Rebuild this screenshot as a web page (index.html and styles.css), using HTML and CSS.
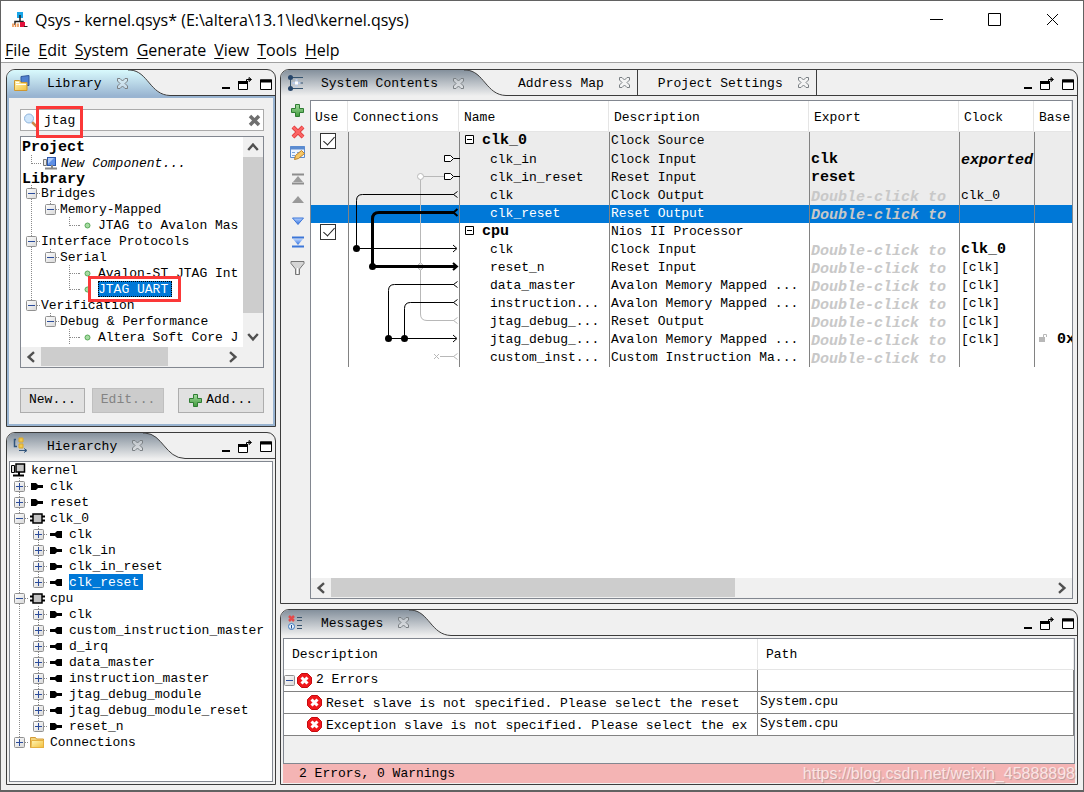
FILE: index.html
```html
<!DOCTYPE html>
<html lang="en">
<head>
<meta charset="utf-8">
<title>Qsys - kernel.qsys*</title>
<link rel="stylesheet" href="styles.css">
</head>
<body>
<svg class="defs" aria-hidden="true">
  <defs>
    <linearGradient id="grad-on" x1="0" y1="0" x2="0" y2="1"><stop offset="0" stop-color="#d9fafd"/><stop offset="1" stop-color="#99b4d1"/></linearGradient>
    <linearGradient id="grad-off" x1="0" y1="0" x2="0" y2="1"><stop offset="0" stop-color="#84909c"/><stop offset="1" stop-color="#f0f0f0"/></linearGradient>
    <linearGradient id="grad-green" x1="0" y1="0" x2="0" y2="1"><stop offset="0" stop-color="#a5dba0"/><stop offset="1" stop-color="#3f9a3a"/></linearGradient>
    <linearGradient id="grad-blue" x1="0" y1="0" x2="0" y2="1"><stop offset="0" stop-color="#b8d3ff"/><stop offset="1" stop-color="#2f6fdd"/></linearGradient>
    <linearGradient id="grad-fold" x1="0" y1="0" x2="1" y2="1"><stop offset="0" stop-color="#fff6b5"/><stop offset="1" stop-color="#f2bf3c"/></linearGradient>
    <linearGradient id="grad-box" x1="0" y1="0" x2="1" y2="1"><stop offset="0" stop-color="#ffffff"/><stop offset="1" stop-color="#d8d8d8"/></linearGradient>
    <symbol id="close" viewBox="0 0 11 11"><path d="M.5.5h2.500L5.500 3 8 .5h2.500v2.500L8 5.500l2.500 2.500v2.500H8L5.500 8 3 10.500H.5V8L3 5.500.5 3z" fill="#ffffff" fill-opacity=".3" stroke="#7b8084"/></symbol>
    <symbol id="min" viewBox="0 0 9 12"><path d="M0 10h8" stroke="#000" stroke-width="2"/></symbol>
    <symbol id="detach" viewBox="0 0 15 14"><path d="M.5 4.500h9v8h-9z" fill="#fff" stroke="#000"/><path d="M0 5.500h10" stroke="#000" stroke-width="3"/><path d="M8.500 5V2.500h4.500M11 .5l2.500 2-2.500 2z" fill="#000" fill-opacity="0" stroke="#000"/></symbol>
    <symbol id="max" viewBox="0 0 12 11"><path d="M.5 1h11v9.500H.5z" fill="#fff" stroke="#000"/><path d="M0 2h12" stroke="#000" stroke-width="3"/></symbol>
    <symbol id="g-v" viewBox="0 0 19 16"><path d="M9.500 0v16" class="dots"/></symbol>
    <symbol id="g-t" viewBox="0 0 19 16"><path d="M9.500 0v16M10 8.500h9" class="dots"/></symbol>
    <symbol id="g-l" viewBox="0 0 19 16"><path d="M9.500 0v9M10 8.500h9" class="dots"/></symbol>
    <symbol id="box" viewBox="0 0 11 11"><rect x=".5" y=".5" width="10" height="10" rx="1" fill="url(#grad-box)" stroke="#919191"/></symbol>
    <symbol id="plus" viewBox="0 0 19 16"><path d="M9.500 0v16M15 8.500h4" class="dots"/><use href="#box" x="4" y="3" width="11" height="11"/><path d="M6 8.500h7M9.500 5v7" stroke="#2b4c9b"/></symbol>
    <symbol id="plus-last" viewBox="0 0 19 16"><path d="M9.500 0v8M15 8.500h4" class="dots"/><use href="#box" x="4" y="3" width="11" height="11"/><path d="M6 8.500h7M9.500 5v7" stroke="#2b4c9b"/></symbol>
    <symbol id="minus" viewBox="0 0 19 16"><path d="M9.500 0v16M15 8.500h4" class="dots"/><use href="#box" x="4" y="3" width="11" height="11"/><path d="M6 8.500h7" stroke="#2b4c9b"/></symbol>
    <symbol id="minus-last" viewBox="0 0 19 16"><path d="M9.500 0v8M15 8.500h4" class="dots"/><use href="#box" x="4" y="3" width="11" height="11"/><path d="M6 8.500h7" stroke="#2b4c9b"/></symbol>
    <symbol id="dot" viewBox="0 0 19 16"><path d="M0 8.500h2" class="dots"/><circle cx="8.500" cy="8.500" r="2.500" fill="#a6dba2" stroke="#57a957"/></symbol>
    <symbol id="port-in" viewBox="0 0 21 16"><path d="M2 5h5l2 2h5v3H9l-2 2H2z"/></symbol>
    <symbol id="port-out" viewBox="0 0 21 16"><path d="M14 5H9L7 7H2v3h5l2 2h5z"/></symbol>
    <symbol id="chip" viewBox="0 0 21 16"><path d="M1 6.500h15M1 10.500h15" stroke="#000" stroke-width="2"/><rect x="4" y="4" width="9" height="9" fill="#c4c4c4" stroke="#000" stroke-width="1.500"/></symbol>
    <symbol id="kernel" viewBox="0 0 21 16"><path d="M1.500 3.500h3v7h-3z" fill="#ddd" stroke="#000"/><path d="M6 2h8.500v8H6z" fill="#c4c4c4" stroke="#000" stroke-width="1.500"/><path d="M9 10v3M3 13.500h11" stroke="#000" stroke-width="2"/></symbol>
    <symbol id="component" viewBox="0 0 20 16"><path d="M2.500 4.500h3v6h-3z" fill="#e8e8e8" stroke="#777"/><rect x="6.500" y="2.500" width="8" height="8" fill="#5f90e6" stroke="#2b57ad"/><path d="M7 3h6l-6 6z" fill="#a9c8fa"/><path d="M11 10v3M4 13.500h12" stroke="#888" stroke-width="2"/></symbol>
    <symbol id="folder" viewBox="0 0 21 16"><path d="M1.500 3.500h5l1 1.500h7v8.500h-13z" fill="#f3d37a" stroke="#d39a35"/><path d="M2.500 6.500h12v7H2z" fill="url(#grad-fold)" stroke="#e5b040"/></symbol>
    <symbol id="add" viewBox="0 0 13 13"><path d="M4.500.5h4v4h4v4h-4v4h-4v-4h-4v-4h4z" fill="url(#grad-green)" stroke="#2f7d33"/></symbol>
    <symbol id="error" viewBox="0 0 15 15"><path d="M4.500.5h6l4 4v6l-4 4h-6l-4-4v-6z" fill="#f0181c" stroke="#c50c10"/><path d="M4.500 4.500l6 6M10.500 4.500l-6 6" stroke="#fff" stroke-width="3"/></symbol>
    <symbol id="tail-on" viewBox="0 0 42 26"><path d="M0 0h2C20 1 22 25 41 25.500L42 26H0z" fill="url(#grad-on)"/><path d="M0 0h2C20 1 22 25 42 25.500" fill="none" stroke="#3c3c3c"/></symbol>
    <symbol id="tail-off" viewBox="0 0 42 26"><path d="M0 0h2C20 1 22 25 41 25.500L42 26H0z" fill="url(#grad-off)"/><path d="M0 0h2C20 1 22 25 42 25.500" fill="none" stroke="#3c3c3c"/></symbol>
    <symbol id="left" viewBox="0 0 10 10"><path d="M7.500 1L3 5l4.500 4" class="chev"/></symbol>
    <symbol id="right" viewBox="0 0 10 10"><path d="M2.500 1L7 5 2.500 9" class="chev"/></symbol>
    <symbol id="up" viewBox="0 0 10 10"><path d="M1 7.500L5 3l4 4.500" class="chev"/></symbol>
    <symbol id="down" viewBox="0 0 10 10"><path d="M1 2.500L5 7l4-4.500" class="chev"/></symbol>
  </defs>
</svg>

<div class="window">
  <div class="titlebar">
    <svg class="logo" width="16" height="18" viewBox="0 0 16 18"><rect x="5" y="1" width="6" height="6" fill="#18a5e8"/><path d="M8 4v7M3 14v-3.500h8v3" fill="none" stroke="#222" stroke-width="1.500"/><path d="M1 16v-3.500M3.500 16v-3.500M6 16v-3.500" stroke="#e88a42" stroke-width="1.500"/><rect x="8" y="11" width="5" height="5" fill="#e2123c"/><path d="M12 15.500h3.500" stroke="#222"/></svg>
    <h1>Qsys - kernel.qsys* (E:\altera\13.1\led\kernel.qsys)</h1>
    <button class="wbtn" aria-label="Minimize"><svg width="13" height="13"><path d="M0 6.500h13"/></svg></button>
    <button class="wbtn" aria-label="Maximize"><svg width="13" height="13"><path d="M.5.5h12v12H.5z"/></svg></button>
    <button class="wbtn" aria-label="Close"><svg width="13" height="13"><path d="M1 1l11 11M12 1L1 12"/></svg></button>
  </div>
  <nav class="menubar">
    <button><u>F</u>ile</button><button><u>E</u>dit</button><button><u>S</u>ystem</button><button><u>G</u>enerate</button><button><u>V</u>iew</button><button><u>T</u>ools</button><button><u>H</u>elp</button>
  </nav>

  <main>
    <div class="column">
      <section class="panel library">
        <header class="tabs">
          <div class="tab on">
            <svg width="18" height="18"><path d="M8 2.500l8-1v10H8z" fill="#4f80cf" stroke="#31589c"/><path d="M1.500 6.500h5l1.500 2h6v8h-12.500z" fill="url(#grad-fold)" stroke="#cf9730"/><path d="M3 10.500h10M3 8.500h3" stroke="#fff"/></svg>
            <span>Library</span>
            <button aria-label="Close Library"><svg width="11" height="11"><use href="#close"/></svg></button>
          </div>
          <svg class="tail" width="42" height="26"><use href="#tail-on"/></svg>
          <div class="fill"><button aria-label="Minimize"><svg width="9" height="12"><use href="#min"/></svg></button><button aria-label="Detach"><svg width="15" height="14"><use href="#detach"/></svg></button><button aria-label="Maximize"><svg width="12" height="11"><use href="#max"/></svg></button></div>
        </header>
        <div class="lib-body">
          <div class="search">
            <svg width="15" height="15"><path d="M9 9l4.500 4.500" stroke="#c98a4a" stroke-width="2.500"/><circle cx="6" cy="5.500" r="4.500" fill="#cfe6fb" stroke="#8fb4dc"/></svg>
            <input type="text" value="jtag" aria-label="Search library">
            <button aria-label="Clear search"><svg width="13" height="13"><path d="M2 2l9 9M11 2l-9 9" stroke="#6f6f6f" stroke-width="3.500"/></svg></button>
            <i class="mark"></i>
          </div>
          <div class="scrollbox">
            <ul class="tree">
              <li class="head">Project</li>
              <li><svg class="g"><use href="#g-l"/></svg><svg width="20" height="16"><use href="#component"/></svg><em>New Component...</em></li>
              <li class="head short">Library</li>
              <li><svg class="g"><use href="#minus"/></svg>Bridges</li>
              <li><svg class="g"><use href="#g-v"/></svg><svg class="g"><use href="#minus-last"/></svg>Memory-Mapped</li>
              <li><svg class="g"><use href="#g-v"/></svg><i class="g"></i><svg class="g"><use href="#g-l"/></svg><svg class="g"><use href="#dot"/></svg>JTAG to Avalon Mas</li>
              <li><svg class="g"><use href="#minus"/></svg>Interface Protocols</li>
              <li><svg class="g"><use href="#g-v"/></svg><svg class="g"><use href="#minus-last"/></svg>Serial</li>
              <li><svg class="g"><use href="#g-v"/></svg><i class="g"></i><svg class="g"><use href="#g-t"/></svg><svg class="g"><use href="#dot"/></svg>Avalon-ST JTAG Int</li>
              <li><svg class="g"><use href="#g-v"/></svg><i class="g"></i><svg class="g"><use href="#g-l"/></svg><svg class="g"><use href="#dot"/></svg><span class="picked focus">JTAG UART<i class="mark"></i></span></li>
              <li><svg class="g"><use href="#minus-last"/></svg>Verification</li>
              <li><i class="g"></i><svg class="g"><use href="#minus-last"/></svg>Debug &amp; Performance</li>
              <li><i class="g"></i><i class="g"></i><svg class="g"><use href="#g-t"/></svg><svg class="g"><use href="#dot"/></svg>Altera Soft Core J</li>
            </ul>
            <div class="vbar"><button aria-label="Up"><svg width="12" height="12"><use href="#up"/></svg></button><div class="track"><div class="thumb"></div></div><button aria-label="Down"><svg width="12" height="12"><use href="#down"/></svg></button></div>
            <div class="hbar"><button aria-label="Left"><svg width="12" height="12"><use href="#left"/></svg></button><div class="track"><div class="thumb"></div></div><button aria-label="Right"><svg width="12" height="12"><use href="#right"/></svg></button></div>
          </div>
          <div class="actions">
            <button>New...</button><button disabled>Edit...</button><button class="last"><svg width="13" height="13"><use href="#add"/></svg>Add...</button>
          </div>
        </div>
      </section>

      <section class="panel hierarchy">
        <header class="tabs">
          <div class="tab off">
            <svg width="18" height="18"><path d="M3 2.500H1.500v7H4" fill="none" stroke="#31557c" stroke-width="1.500"/><path d="M6 1h4v4H6zM6 7h4v4H6z" fill="#f2c94b" stroke="#dba92d"/><path d="M6 13.500h7M11 11.500l3 2-3 2" fill="none" stroke="#31557c"/></svg>
            <span>Hierarchy</span>
            <button aria-label="Close Hierarchy"><svg width="11" height="11"><use href="#close"/></svg></button>
          </div>
          <svg class="tail" width="42" height="26"><use href="#tail-off"/></svg>
          <div class="fill"><button aria-label="Minimize"><svg width="9" height="12"><use href="#min"/></svg></button><button aria-label="Detach"><svg width="15" height="14"><use href="#detach"/></svg></button><button aria-label="Maximize"><svg width="12" height="11"><use href="#max"/></svg></button></div>
        </header>
        <ul class="tree boxed">
          <li><svg class="ic"><use href="#kernel"/></svg>kernel</li>
          <li><svg class="g"><use href="#plus"/></svg><svg class="ic"><use href="#port-in"/></svg>clk</li>
          <li><svg class="g"><use href="#plus"/></svg><svg class="ic"><use href="#port-in"/></svg>reset</li>
          <li><svg class="g"><use href="#minus"/></svg><svg class="ic"><use href="#chip"/></svg>clk_0</li>
          <li><svg class="g"><use href="#g-v"/></svg><svg class="g"><use href="#plus"/></svg><svg class="ic"><use href="#port-out"/></svg>clk</li>
          <li><svg class="g"><use href="#g-v"/></svg><svg class="g"><use href="#plus"/></svg><svg class="ic"><use href="#port-in"/></svg>clk_in</li>
          <li><svg class="g"><use href="#g-v"/></svg><svg class="g"><use href="#plus"/></svg><svg class="ic"><use href="#port-in"/></svg>clk_in_reset</li>
          <li><svg class="g"><use href="#g-v"/></svg><svg class="g"><use href="#plus-last"/></svg><svg class="ic"><use href="#port-out"/></svg><span class="picked">clk_reset</span></li>
          <li><svg class="g"><use href="#minus"/></svg><svg class="ic"><use href="#chip"/></svg>cpu</li>
          <li><svg class="g"><use href="#g-v"/></svg><svg class="g"><use href="#plus"/></svg><svg class="ic"><use href="#port-in"/></svg>clk</li>
          <li><svg class="g"><use href="#g-v"/></svg><svg class="g"><use href="#plus"/></svg><svg class="ic"><use href="#port-out"/></svg>custom_instruction_master</li>
          <li><svg class="g"><use href="#g-v"/></svg><svg class="g"><use href="#plus"/></svg><svg class="ic"><use href="#port-out"/></svg>d_irq</li>
          <li><svg class="g"><use href="#g-v"/></svg><svg class="g"><use href="#plus"/></svg><svg class="ic"><use href="#port-out"/></svg>data_master</li>
          <li><svg class="g"><use href="#g-v"/></svg><svg class="g"><use href="#plus"/></svg><svg class="ic"><use href="#port-out"/></svg>instruction_master</li>
          <li><svg class="g"><use href="#g-v"/></svg><svg class="g"><use href="#plus"/></svg><svg class="ic"><use href="#port-in"/></svg>jtag_debug_module</li>
          <li><svg class="g"><use href="#g-v"/></svg><svg class="g"><use href="#plus"/></svg><svg class="ic"><use href="#port-out"/></svg>jtag_debug_module_reset</li>
          <li><svg class="g"><use href="#g-v"/></svg><svg class="g"><use href="#plus-last"/></svg><svg class="ic"><use href="#port-in"/></svg>reset_n</li>
          <li><svg class="g"><use href="#plus-last"/></svg><svg class="ic"><use href="#folder"/></svg>Connections</li>
        </ul>
      </section>
    </div>

    <div class="column">
      <section class="panel contents">
        <header class="tabs">
          <div class="tab off">
            <svg width="18" height="18"><path d="M3.500 3v11M3.500 3.500H16M3.500 14.500H16M10 9h6" fill="none" stroke="#35536f"/><circle cx="3.500" cy="3.500" r="2.500" fill="#27466b"/><circle cx="3.500" cy="14.500" r="2.500" fill="#27466b"/><path d="M9.500 5v8M5.500 9h8" stroke="#b9cbe8" stroke-width="2"/><rect x="8" y="7.500" width="3" height="3" fill="#fff"/></svg>
            <span>System Contents</span>
            <button aria-label="Close System Contents"><svg width="11" height="11"><use href="#close"/></svg></button>
          </div>
          <svg class="tail" width="42" height="26"><use href="#tail-off"/></svg>
          <div class="tab plain first"><span>Address Map</span><button aria-label="Close Address Map"><svg width="11" height="11"><use href="#close"/></svg></button></div>
          <div class="tab plain"><span>Project Settings</span><button aria-label="Close Project Settings"><svg width="11" height="11"><use href="#close"/></svg></button></div>
          <div class="fill"><button aria-label="Minimize"><svg width="9" height="12"><use href="#min"/></svg></button><button aria-label="Detach"><svg width="15" height="14"><use href="#detach"/></svg></button><button aria-label="Maximize"><svg width="12" height="11"><use href="#max"/></svg></button></div>
        </header>
        <div class="sys-body">
          <div class="toolbar">
            <button aria-label="Add"><svg width="13" height="13"><use href="#add"/></svg></button>
            <button aria-label="Remove"><svg width="14" height="14"><path d="M2 2l10 10M12 2L2 12" stroke="#d93434" stroke-width="4"/><path d="M2 2l10 10M12 2L2 12" stroke="#fb6464" stroke-width="2.500"/></svg></button>
            <button aria-label="Edit"><svg width="17" height="16"><path d="M1.500 1.500h14v11h-14z" fill="#eef5ff" stroke="#5b8bd0"/><path d="M1 3h15" stroke="#5b8bd0" stroke-width="3"/><path d="M3 7.500h3M8 7.500h5M3 10.500h3" stroke="#7da4da"/><path d="M5.500 14.500l1-4 6-5 3 3-6 5z" fill="#f6c766" stroke="#bb802a"/></svg></button>
            <button class="gap" aria-label="Move to top"><svg width="14" height="12"><path d="M1 1.500h12M1 10.500h12" stroke="#8d8d8d" stroke-width="2"/><path d="M7 3l5 6H2z" fill="#9c9c9c"/></svg></button>
            <button aria-label="Move up"><svg width="14" height="12"><path d="M7 2l6 7H1z" fill="#999"/></svg></button>
            <button aria-label="Move down"><svg width="14" height="12"><path d="M1.500 3h11L7 9.500z" fill="url(#grad-blue)" stroke="#3c76d8"/></svg></button>
            <button aria-label="Move to bottom"><svg width="14" height="12"><path d="M1 1.500h12M1 10.500h12" stroke="#3c76d8" stroke-width="2"/><path d="M2 3h10L7 9z" fill="url(#grad-blue)"/></svg></button>
            <button class="gap" aria-label="Filter"><svg width="15" height="16"><path d="M1 1.500h13v2L9.500 9v5.500h-4V9L1 3.500z" fill="#d5d5d5" stroke="#777"/><path d="M7.500 8v6" stroke="#fff"/></svg></button>
          </div>
          <div class="sys-box">
            <div class="grid-wrap">
              <table class="grid">
                <colgroup><col class="c-use"><col class="c-con"><col class="c-name"><col class="c-desc"><col class="c-exp"><col class="c-clk"><col></colgroup>
                <thead><tr><th>Use</th><th>Connections</th><th>Name</th><th>Description</th><th>Export</th><th>Clock</th><th>Base</th></tr></thead>
                <tbody>
                  <tr class="shade"><td><input type="checkbox" checked aria-label="Use clk_0"></td><td class="wires"><svg width="111" height="234" fill="none" stroke="#000">
                    <path d="M71.500 48v134q0 6.500 6.500 6.500h27M75 44.500h21M104.500 188.500l4-3M104.500 188.500l4 3M91 224.500h14M104.500 224.500l4-3M104.500 224.500l4 3M85 222l5 5M90 222l-5 5" stroke="#b8b8b8"/>
                    <circle cx="71.500" cy="44.500" r="3" fill="#fff" stroke="#b8b8b8"/>
                    <path d="M71.500 130.500l4 4-4 4-4-4z" fill="#e0e0e0" stroke="#b8b8b8"/>
                    <path d="M95.500 23.500h6l3 3-3 3h-6zM95.500 41.500h6l3 3-3 3h-6z" fill="#fff"/>
                    <path d="M105 26.500h6M105 44.500h6"/>
                    <path d="M105 62.500H13.500q-6 0-6 6v48H107M108.500 59.500l-4 3 4 3M104 113l4 3.500-4 3.500"/>
                    <path d="M105 80.500H30q-6.500 0-6.500 6.500v47.500H107" stroke-width="3"/>
                    <path d="M108.500 77l-4 3.500 4 3.500M104 131l4 3.500-4 3.500" stroke-width="2"/>
                    <path d="M105 152.500H45.500q-6 0-6 6v48H107M105 170.500H61.500q-6 0-6 6v30M108.500 149.500l-4 3 4 3M108.500 167.500l-4 3 4 3M104 203l4 3.500-4 3.500"/>
                    <g fill="#000" stroke="none"><circle cx="7.500" cy="116.500" r="3.500"/><circle cx="23.500" cy="134.500" r="3.500"/><circle cx="39.500" cy="206.500" r="3.500"/><circle cx="55.500" cy="206.500" r="3.500"/></g>
                  </svg></td><td class="top"><svg width="9" height="9"><path d="M.5.5h8v8h-8zM2 4.500h5"/></svg><b>clk_0</b></td><td>Clock Source</td><td></td><td></td><td></td></tr>
                  <tr class="shade"><td></td><td></td><td class="sub">clk_in</td><td>Clock Input</td><td><b>clk</b></td><td class="low"><b><em>exported</em></b></td><td></td></tr>
                  <tr class="shade"><td></td><td></td><td class="sub">clk_in_reset</td><td>Reset Input</td><td><b>reset</b></td><td></td><td></td></tr>
                  <tr class="shade"><td></td><td></td><td class="sub">clk</td><td>Clock Output</td><td class="hint low">Double-click to</td><td>clk_0</td><td></td></tr>
                  <tr class="sel"><td></td><td></td><td class="sub">clk_reset</td><td>Reset Output</td><td class="hint low">Double-click to</td><td></td><td></td></tr>
                  <tr><td><input type="checkbox" checked aria-label="Use cpu"></td><td></td><td class="top"><svg width="9" height="9"><path d="M.5.5h8v8h-8zM2 4.500h5"/></svg><b>cpu</b></td><td>Nios II Processor</td><td></td><td></td><td></td></tr>
                  <tr><td></td><td></td><td class="sub">clk</td><td>Clock Input</td><td class="hint low">Double-click to</td><td><b>clk_0</b></td><td></td></tr>
                  <tr><td></td><td></td><td class="sub">reset_n</td><td>Reset Input</td><td class="hint low">Double-click to</td><td>[clk]</td><td></td></tr>
                  <tr><td></td><td></td><td class="sub">data_master</td><td>Avalon Memory Mapped ...</td><td class="hint low">Double-click to</td><td>[clk]</td><td></td></tr>
                  <tr><td></td><td></td><td class="sub">instruction...</td><td>Avalon Memory Mapped ...</td><td class="hint low">Double-click to</td><td>[clk]</td><td></td></tr>
                  <tr><td></td><td></td><td class="sub">jtag_debug_...</td><td>Reset Output</td><td class="hint low">Double-click to</td><td>[clk]</td><td></td></tr>
                  <tr><td></td><td></td><td class="sub">jtag_debug_...</td><td>Avalon Memory Mapped ...</td><td class="hint low">Double-click to</td><td>[clk]</td><td class="base"><svg width="10" height="10"><path d="M1 4h6v5H1z" fill="#b8b8b8"/><path d="M5.500 4V1.500h3V4" fill="none" stroke="#b8b8b8"/></svg><b>0x</b></td></tr>
                  <tr><td></td><td></td><td class="sub">custom_inst...</td><td>Custom Instruction Ma...</td><td class="hint low">Double-click to</td><td></td><td></td></tr>
                </tbody>
              </table>
            </div>
            <div class="hbar"><button aria-label="Left"><svg width="12" height="12"><use href="#left"/></svg></button><div class="track"><div class="thumb"></div></div><button aria-label="Right"><svg width="12" height="12"><use href="#right"/></svg></button></div>
          </div>
        </div>
      </section>

      <section class="panel messages">
        <header class="tabs">
          <div class="tab off">
            <svg width="18" height="18"><path d="M2 2l5 5M7 2L2 7" stroke="#e44a4a" stroke-width="2.500"/><circle cx="4.500" cy="12.500" r="3" fill="#e5f0fb" stroke="#3d7ac0"/><path d="M4.500 11v3.500" stroke="#1c4f94"/><path d="M10 3.500h5M10 6.500h5M10 11.500h5M10 14.500h5" stroke="#38536d"/></svg>
            <span>Messages</span>
            <button aria-label="Close Messages"><svg width="11" height="11"><use href="#close"/></svg></button>
          </div>
          <svg class="tail" width="42" height="26"><use href="#tail-off"/></svg>
          <div class="fill"><button aria-label="Minimize"><svg width="9" height="12"><use href="#min"/></svg></button><button aria-label="Detach"><svg width="15" height="14"><use href="#detach"/></svg></button><button aria-label="Maximize"><svg width="12" height="11"><use href="#max"/></svg></button></div>
        </header>
        <div class="msg-box">
          <table class="msgs">
            <colgroup><col class="c-msg"><col></colgroup>
            <thead><tr><th>Description</th><th>Path</th></tr></thead>
            <tbody>
              <tr><td><div class="line"><svg width="11" height="11"><use href="#box"/><path d="M2 5.500h7" stroke="#2b4c9b"/></svg><svg width="15" height="15"><use href="#error"/></svg>2 Errors</div></td><td></td></tr>
              <tr><td><div class="line child"><svg width="15" height="15"><use href="#error"/></svg><span>Reset slave is not specified. Please select the reset</span></div></td><td>System.cpu</td></tr>
              <tr><td><div class="line child"><svg width="15" height="15"><use href="#error"/></svg><span>Exception slave is not specified. Please select the ex</span></div></td><td>System.cpu</td></tr>
            </tbody>
          </table>
        </div>
        <footer><span>2 Errors, 0 Warnings</span><span class="credit">https://blog.csdn.net/weixin_45888898</span></footer>
      </section>
    </div>
  </main>
</div>
</body>
</html>
```
FILE: styles.css
```css
* { box-sizing: border-box; }
body {
  margin: 0;
  background: #f0f0f0;
  color: #000;
  font: 13px/16px "Liberation Mono", monospace;
}
button { margin: 0; padding: 0; border: 0; background: none; font: inherit; color: inherit; }
svg { display: block; flex: none; }
b { font-size: 15px; }
.defs { position: absolute; width: 0; height: 0; }
.dots { stroke: #8a8a8a; stroke-dasharray: 1 1; fill: none; }
.chev { stroke: #505050; stroke-width: 2; fill: none; }

.window {
  display: flex;
  flex-direction: column;
  height: 100vh;
  border: 1px solid #626262;
  border-bottom-width: 2px;
}
.titlebar, .menubar { display: flex; align-items: center; background: #fff; }
.titlebar { height: 37px; padding: 0 2px 0 11px; }
.titlebar h1 { flex: 1; margin: 0 0 0 7px; font: 400 16px/22px "Open Sans", sans-serif; }
.wbtn { display: flex; width: 58px; height: 36px; align-items: center; justify-content: center; }
.wbtn svg { fill: none; stroke: #000; }
.menubar { height: 25px; gap: 8px; padding-left: 4px; border-bottom: 1px solid #a0a0a0; font: 16px/22px "Open Sans", sans-serif; }
.menubar u { text-underline-offset: 2px; }

main {
  flex: 1;
  display: grid;
  grid-template-columns: 270px minmax(0, 1fr);
  gap: 4px;
  min-height: 0;
  padding: 6px 5px 5px;
}
.column { display: flex; flex-direction: column; gap: 5px; min-width: 0; min-height: 0; }
.panel {
  display: flex;
  flex-direction: column;
  min-height: 0;
  overflow: hidden;
  border: 1px solid #3c3c3c;
  border-radius: 9px 9px 0 0;
  background: #f0f0f0;
}
.library { flex: 359 1 0; }
.hierarchy { flex: 354 1 0; }
.contents { flex: 536 1 0; }
.messages { flex: 175 1 0; }

.tabs { display: flex; flex: none; height: 26px; }
.tab { display: flex; align-items: center; padding-left: 6px; }
.tab > svg { margin-right: 16px; }
.tab span { margin-right: 15px; padding-top: 2px; }
.tab.on { background: linear-gradient(#d9fafd, #99b4d1); }
.tab.off { background: linear-gradient(#84909c, #f0f0f0); }
.tab.plain { padding: 0 7px 0 20px; border-right: 1px solid #3c3c3c; border-bottom: 1px solid #3c3c3c; }
.tab.first { padding-left: 12px; }
.fill {
  display: flex;
  flex: 1;
  align-items: center;
  justify-content: flex-end;
  gap: 7px;
  padding: 3px 3px 0 0;
  border-bottom: 1px solid #3c3c3c;
}

.lib-body {
  display: flex;
  flex: 1;
  flex-direction: column;
  min-height: 0;
  padding: 11px 9px 11px 11px;
  border: 2px solid #99b4d1;
}
.search {
  position: relative;
  display: flex;
  flex: none;
  align-items: center;
  height: 22px;
  margin-bottom: 5px;
  padding: 0 2px;
  border: 1px solid #ababab;
  background: #fff;
}
.search input { flex: 1; min-width: 0; margin-left: 6px; padding: 2px 0 0; border: 0; outline: 0; background: none; font: inherit; }
.mark { position: absolute; border: 3px solid #fb3838; }
.search .mark { left: 15px; top: -4px; width: 47px; height: 32px; }
.picked .mark { left: -10px; top: -5px; width: 93px; height: 26px; }

.scrollbox {
  display: grid;
  flex: 1;
  grid-template: minmax(0, 1fr) 20px / minmax(0, 1fr) 20px;
  min-height: 0;
  border: 1px solid #828790;
}
.tree { margin: 0; padding: 2px 0 0 1px; overflow: hidden; list-style: none; background: #fff; }
.tree li { display: flex; height: 16px; line-height: 18px; white-space: pre; }
.tree .head { font-size: 15px; font-weight: 700; }
.tree .short { height: 14px; }
.tree .g { flex: none; width: 19px; height: 16px; }
.tree .ic { width: 21px; height: 16px; }
.boxed { flex: 1; margin: 2px; padding: 0; border: 1px solid #828790; }
.picked { position: relative; height: 16px; padding-right: 4px; background: #0078d7; color: #fff; }
.focus { outline: 1px dotted #000; outline-offset: -1px; }

.vbar, .hbar { display: flex; background: #f0f0f0; }
.vbar { flex-direction: column; }
.vbar button, .hbar button { display: flex; flex: none; width: 20px; height: 20px; align-items: center; justify-content: center; }
.vbar .track, .hbar .track { flex: 1; }
.thumb { background: #cdcdcd; }
.vbar .thumb { height: 92%; }
.hbar .thumb { height: 19px; width: 56%; }
.scrollbox .hbar .thumb { width: 70%; }

.actions { display: flex; flex: none; gap: 7px; margin-top: 20px; }
.actions button { display: flex; height: 25px; align-items: center; gap: 4px; padding: 0 8px; border: 1px solid #adadad; background: #e1e1e1; }
.actions button:disabled { border-color: #bfbfbf; background: #ccc; color: #838383; }
.actions .last { margin-left: auto; padding: 0 10px; }

.sys-body { display: flex; flex: 1; min-height: 0; padding: 4px; }
.toolbar { display: flex; width: 25px; flex-direction: column; align-items: center; }
.toolbar button { display: flex; height: 21px; align-items: center; }
.toolbar .gap { margin-top: 5px; }
.sys-box { display: flex; flex: 1; flex-direction: column; min-width: 0; border: 1px solid #828790; background: #fff; }
.grid-wrap { flex: 1; min-height: 0; overflow: hidden; }
table { width: 100%; table-layout: fixed; border-spacing: 0; }
th, td { padding: 0; text-align: left; white-space: pre; font-weight: 400; }
.c-use { width: 37px; }
.c-con { width: 111px; }
.c-name { width: 150px; }
.c-desc { width: 200px; }
.c-exp { width: 150px; }
.c-clk { width: 75px; }
.grid th { height: 31px; padding: 3px 0 0 4px; border-right: 1px solid #e5e5e5; border-bottom: 1px solid #e5e5e5; }
.grid th:nth-child(n+2) { padding-left: 5px; }
.grid td { height: 18px; padding-left: 1px; line-height: 18px; overflow: hidden; border-left: 1px solid #828282; }
.grid td:first-child { padding-left: 9px; border-left: 0; }
.grid td b { line-height: 16px; }
.grid .wires { position: relative; overflow: visible; }
.wires svg { position: absolute; top: 0; left: 0; }
.grid .low { padding-top: 3px; line-height: 15px; }
.grid .hint { color: #c8c8c8; font-size: 15px; font-weight: 700; font-style: italic; }
.grid .sub { padding-left: 30px; }
.top svg, .base svg { display: inline-block; }
.grid .top { padding-left: 5px; }
.top svg { margin-right: 8px; fill: #fff; stroke: #000; }
.grid .base { padding-left: 3px; }
.base svg { margin-right: 9px; }
.shade td { background: #ececec; }
.sel td { background: #0078d7; color: #fff; }
input[type="checkbox"] {
  display: block;
  width: 16px;
  height: 16px;
  margin: 0;
  appearance: none;
  border: 1px solid #333;
  background: #fff;
}
input[type="checkbox"]:checked::before {
  content: "";
  display: block;
  width: 5px;
  height: 10px;
  margin: 0 0 0 5px;
  border: solid #222;
  border-width: 0 1px 1px 0;
  transform: rotate(42deg);
}

.msg-box { flex: 1; min-height: 0; margin: 2px 2px 0; overflow: hidden; border: 1px solid #828790; }
.c-msg { width: 60%; }
.msgs th { height: 31px; padding: 3px 0 0 8px; border-right: 1px solid #e5e5e5; border-bottom: 1px solid #e5e5e5; background: #fff; }
.msgs td { height: 22px; padding: 0 0 0 2px; overflow: hidden; border: solid #828282; border-width: 0 1px 1px 0; background: #fff; }
.msgs td:first-child { padding: 0; }
.line { display: flex; height: 20px; align-items: center; gap: 4px; }
.line svg:first-child + svg { margin-left: -2px; }
.child { padding-left: 23px; }
.child span { padding-top: 4px; }
footer { display: flex; flex: none; height: 19px; align-items: center; justify-content: space-between; margin: 0 2px 1px; padding: 0 0 0 16px; background: #f4b4b4; }
.credit { font: 16px/18px "Liberation Sans", Arial, sans-serif; color: #fbe4e4; text-shadow: 1px 1px 1px #b59a9a; }
```
